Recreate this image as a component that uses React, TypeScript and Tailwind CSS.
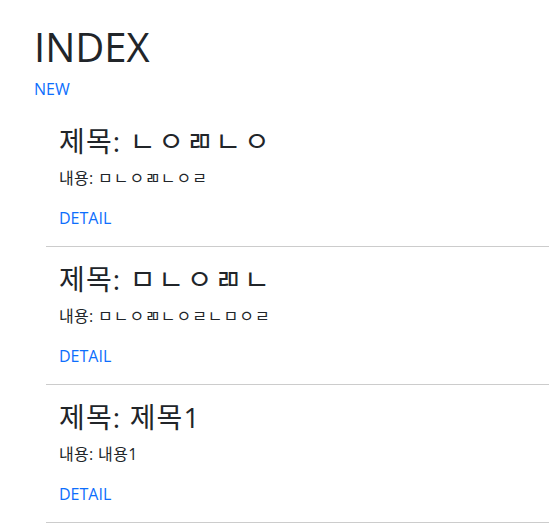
import React from 'react';

const POSTS = [
  { id: 3, title: 'ㄴㅇㄻㄴㅇ', content: 'ㅁㄴㅇㄻㄴㅇㄹ' },
  { id: 2, title: 'ㅁㄴㅇㄻㄴ', content: 'ㅁㄴㅇㄻㄴㅇㄹㄴㅁㅇㄹ' },
  { id: 1, title: '제목1', content: '내용1' },
];

// bare jamo strings render narrower than in the original font; widen them a bit
const isJamo = (s: string) => /^[\u3131-\u318E]+$/.test(s);

export default function App() {
  return (
    <div
      className="min-h-screen bg-white pl-[34px] pt-[22px] text-[#212529]"
      style={{ fontFamily: '"Open Sans", "Noto Sans CJK KR", sans-serif' }}
    >
      <h1 className="text-[40px] leading-[50px] font-normal">INDEX</h1>
      <a href="#" className="block text-[16px] leading-[24px] text-[#0d6efd] mt-[5px]">
        NEW
      </a>

      {/* post list */}
      <ul className="ml-[12px] mt-[8px]">
        {POSTS.map((post) => (
          <li key={post.id} className="border-b border-[#cccccc] px-[13px] py-[16px]">
            <h3 className="text-[28px] leading-[33px] font-normal mb-[8px] whitespace-nowrap tracking-[0.04em]">
              제목:{' '}
              <span className={isJamo(post.title) ? 'tracking-[0.1em]' : ''}>{post.title}</span>
            </h3>
            <p className="text-[16px] leading-[24px] mb-[16px] whitespace-nowrap tracking-[0.02em]">
              내용:{' '}
              <span className={isJamo(post.content) ? 'tracking-[0.06em]' : ''}>{post.content}</span>
            </p>
            <a href="#" className="block text-[16px] leading-[24px] text-[#0d6efd]">
              DETAIL
            </a>
          </li>
        ))}
      </ul>
    </div>
  );
}
